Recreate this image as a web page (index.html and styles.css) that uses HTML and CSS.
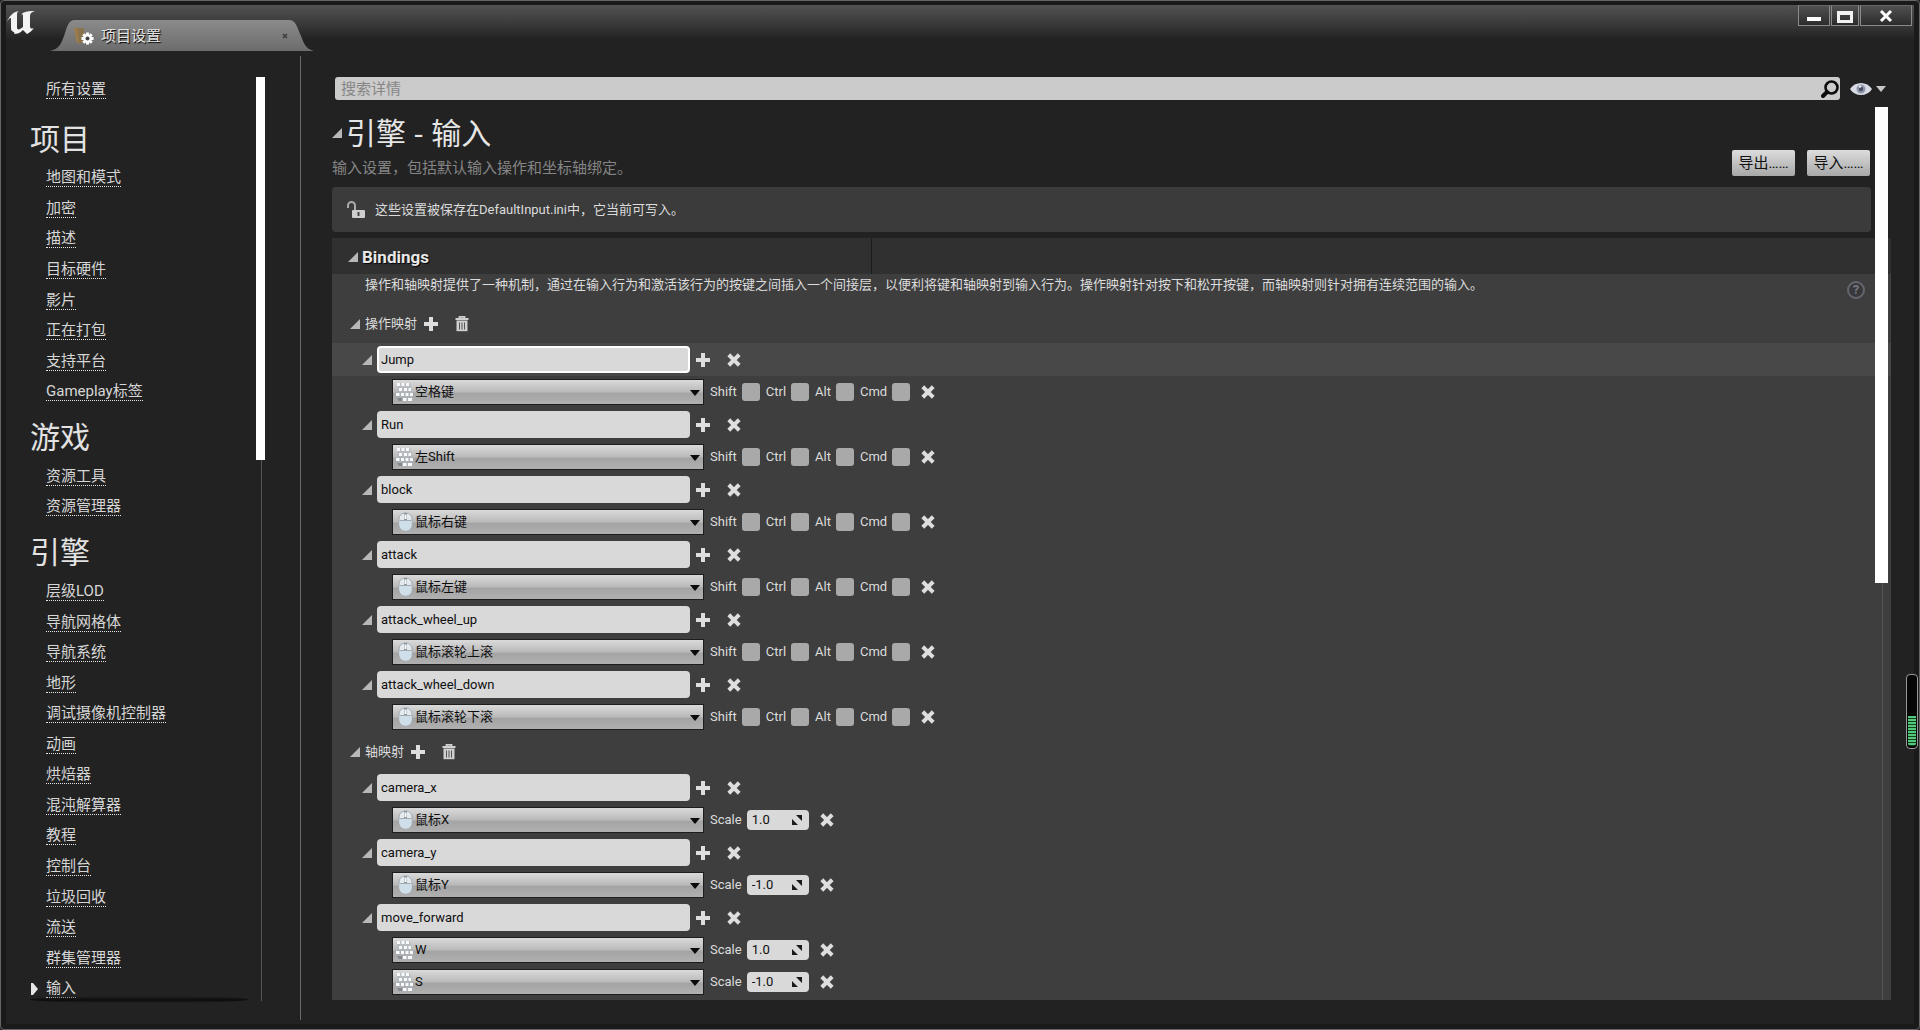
FILE: index.html
```html
<!DOCTYPE html>
<html lang="zh-CN">
<head>
<meta charset="utf-8">
<title>项目设置</title>
<link rel="stylesheet" href="styles.css">
</head>
<body>
<svg class="defs" aria-hidden="true">
  <symbol id="tri" viewBox="0 0 10 10"><path d="M10 0V10H0Z" fill="#b8b8b8"/></symbol>
  <symbol id="plus" viewBox="0 0 14 14"><path d="M5 0H9V5H14V9H9V14H5V9H0V5H5Z" fill="#dedede"/></symbol>
  <symbol id="cross" viewBox="0 0 14 14"><path d="M3.200 3.200L10.800 10.800M10.800 3.200L3.200 10.800" stroke="#dedede" stroke-width="4" stroke-linecap="square"/></symbol>
  <symbol id="trash" viewBox="0 0 14 16"><path d="M4.500 2V.8H9.500V2M.5 3H13.500" stroke="#d0d0d0" stroke-width="1.800" fill="none"/><path d="M1.500 4.500H12.500V15.200H1.500Z" fill="#d0d0d0"/><path d="M4.500 6.500V13.500M7 6.500V13.500M9.500 6.500V13.500" stroke="#555"/></symbol>
  <symbol id="down" viewBox="0 0 10 6"><path d="M0 0H10L5 6Z" fill="#0a0a0a"/></symbol>
  <symbol id="spin" viewBox="0 0 12 12"><path d="M5 1H11V7ZM1 5V11H7Z" fill="#1a1a1a"/></symbol>
  <symbol id="keys" viewBox="0 0 18 20"><path d="M1 1H14L18 19H3Z" fill="#aeb4ba" opacity=".6"/><g fill="#f7f9fb"><path d="M1 1h3v3H1zM5.500 1h3v3h-3zM10 1h3v3h-3zM3 6h3v3H3zM8 6h3v3H8zM12.500 6h2.500v3h-2.500zM0 11h3.500v3H0zM5 11h3v3H5zM9.500 11h3v3h-3zM14 11h3v3h-3zM7 16h3.500v3H7zM12 16h4v3h-4z"/></g><path d="M1 16h5v3H3z" fill="#84898e"/></symbol>
  <symbol id="mouse" viewBox="0 0 18 20"><rect x="3" y="1" width="13" height="18" rx="6" fill="#e4eaee" stroke="#a3abb2"/><path d="M3.500 9H15.500V13A6 5.500 0 0 1 3.500 13Z" fill="#cfdfea"/><path d="M9.500 1V8" stroke="#8d979f" stroke-width="3"/><path d="M3.500 8.500H15.500" stroke="#a3abb2"/><path d="M9.500 2.500V7" stroke="#fafcfd" stroke-width="2"/></symbol>
</svg>
<div class="window">
  <header class="titlebar">
    <svg class="logo" viewBox="0 0 30 25" aria-label="Unreal"><path d="M1 12C3 6 7 2 13 1C11 2 11 3 11 5V17C11 19 12 20 14 19L17 17V6C17 4 16 4 15 5C17 2 20 1 29 1C26 2 24 3 24 6V16C24 19 26 19 28 18C26 21 23 23 21 24L17 20C14 23 11 24 8 24C8 24 10 23 6 21C5 20 5 19 5 17V9C5 7 3 8 1 12Z" fill="#f4f4f4"/></svg>
    <div class="tab">
      <svg class="tab-shape" viewBox="0 0 264 31" preserveAspectRatio="none"><defs><linearGradient id="tg" x1="0" y1="0" x2="0" y2="1"><stop offset="0" stop-color="#8b8b8b"/><stop offset="1" stop-color="#6c6c6c"/></linearGradient></defs><path d="M0 31C9 29 11 24 14 16C17 7 18 0 25 0H239C246 0 247 7 251 16C254 24 256 29 264 31Z" fill="url(#tg)"/></svg>
      <svg class="tab-icon" viewBox="0 0 20 20"><path d="M0 1L5 3V18L2 15Z" fill="#9c7c4c"/><path d="M3 2H10V6L13 14L5 18Z" fill="#8a744e"/><g stroke="#fff" stroke-width="3"><path d="M13.500 6.500V18.500M7.500 12.500H19.500M9.300 8.300L17.700 16.700M17.700 8.300L9.300 16.700"/></g><circle cx="13.500" cy="12.500" r="4.200" fill="#fff"/><circle cx="13.500" cy="12.500" r="2" fill="#444"/></svg>
      <span class="tab-title">项目设置</span>
      <button class="tab-close" aria-label="关闭标签"><svg viewBox="0 0 6 6"><path d="M1 1L5 5M5 1L1 5" stroke="#3c3c3c" stroke-width="1.500"/></svg></button>
    </div>
    <div class="win-buttons">
      <button class="win-min" aria-label="最小化"><svg viewBox="0 0 18 16"><path d="M2 9H16V13H2Z" fill="#fff"/></svg></button>
      <button class="win-max" aria-label="最大化"><svg viewBox="0 0 18 16"><path d="M1 3H17V15H1ZM4 7V12H14V7Z" fill="#f2f2f2" fill-rule="evenodd"/></svg></button>
      <button class="win-close" aria-label="关闭"><svg viewBox="0 0 18 16"><path d="M4 3L14 13M14 3L4 13" stroke="#fff" stroke-width="3"/></svg></button>
    </div>
  </header>
  <div class="content">
    <aside class="sidebar">
      <nav class="nav">
        <div class="item"><a href="#">所有设置</a></div>
        <h2 class="first">项目</h2>
        <div class="item"><a href="#">地图和模式</a></div>
        <div class="item"><a href="#">加密</a></div>
        <div class="item"><a href="#">描述</a></div>
        <div class="item"><a href="#">目标硬件</a></div>
        <div class="item"><a href="#">影片</a></div>
        <div class="item"><a href="#">正在打包</a></div>
        <div class="item"><a href="#">支持平台</a></div>
        <div class="item"><a href="#">Gameplay标签</a></div>
        <h2>游戏</h2>
        <div class="item"><a href="#">资源工具</a></div>
        <div class="item"><a href="#">资源管理器</a></div>
        <h2>引擎</h2>
        <div class="item"><a href="#">层级LOD</a></div>
        <div class="item"><a href="#">导航网格体</a></div>
        <div class="item"><a href="#">导航系统</a></div>
        <div class="item"><a href="#">地形</a></div>
        <div class="item"><a href="#">调试摄像机控制器</a></div>
        <div class="item"><a href="#">动画</a></div>
        <div class="item"><a href="#">烘焙器</a></div>
        <div class="item"><a href="#">混沌解算器</a></div>
        <div class="item"><a href="#">教程</a></div>
        <div class="item"><a href="#">控制台</a></div>
        <div class="item"><a href="#">垃圾回收</a></div>
        <div class="item"><a href="#">流送</a></div>
        <div class="item"><a href="#">群集管理器</a></div>
        <div class="item current"><svg viewBox="0 0 7 12"><path d="M0 0H2L7 6L2 12H0Z" fill="#e6e6e6"/></svg><a href="#" aria-current="page">输入</a></div>
      </nav>
      <div class="scroll side-scroll"><span class="thumb"></span></div>
    </aside>
    <main class="main">
      <div class="search-row">
        <label class="search"><input type="text" placeholder="搜索详情" aria-label="搜索详情"><svg viewBox="0 0 18 18"><circle cx="10.500" cy="7.500" r="6" fill="none" stroke="#0c0c0c" stroke-width="2.600"/><path d="M6 12L2 16" stroke="#0c0c0c" stroke-width="4" stroke-linecap="round"/></svg></label>
        <button class="view" aria-label="视图选项"><svg class="eye" viewBox="0 0 22 14"><path d="M0 7C5 -1 17 -1 22 7C17 15 5 15 0 7Z" fill="#d9dce6"/><circle cx="11" cy="7" r="4.500" fill="#8f96ab"/><circle cx="11" cy="7" r="2.200" fill="#4a4f62"/><circle cx="10" cy="4.500" r="1.300" fill="#e8eaf2"/></svg><svg class="caret" viewBox="0 0 10 6"><path d="M0 0H10L5 6Z" fill="#c8c8c8"/></svg></button>
      </div>
      <div class="scroll-area">
        <div class="page-head">
          <div class="titles">
            <h1><svg class="tri"><use href="#tri"/></svg>引擎 - 输入</h1>
            <p>输入设置，包括默认输入操作和坐标轴绑定。</p>
          </div>
          <div class="actions"><button>导出……</button><button>导入……</button></div>
        </div>
        <div class="notice"><svg viewBox="0 0 18 18"><path d="M1 7V4.500A3.500 3.500 0 0 1 8 4.500V9" fill="none" stroke="#aaa" stroke-width="2"/><rect x="5" y="9" width="13" height="8" rx="1" fill="#cfcfcf"/><path d="M11.500 11V15" stroke="#444" stroke-width="2"/></svg>这些设置被保存在DefaultInput.ini中，它当前可写入。</div>
        <section class="panel">
          <div class="panel-head"><h3><svg class="tri"><use href="#tri"/></svg>Bindings</h3><span></span></div>
          <div class="desc"><p>操作和轴映射提供了一种机制，通过在输入行为和激活该行为的按键之间插入一个间接层，以便利将键和轴映射到输入行为。操作映射针对按下和松开按键，而轴映射则针对拥有连续范围的输入。</p><button class="help" aria-label="帮助">?</button></div>
          <div class="group-head"><svg class="tri"><use href="#tri"/></svg><span>操作映射</span><button class="ico" aria-label="添加"><svg><use href="#plus"/></svg></button><button class="ico" aria-label="全部删除"><svg class="bin"><use href="#trash"/></svg></button></div>

          <div class="name-row selected"><svg class="tri"><use href="#tri"/></svg><input type="text" value="Jump" aria-label="操作名称"><button class="ico" aria-label="添加"><svg><use href="#plus"/></svg></button><button class="ico" aria-label="移除"><svg><use href="#cross"/></svg></button></div>
          <div class="key-row"><div class="combo"><svg class="kind"><use href="#keys"/></svg><select aria-label="按键"><option>空格键</option></select><svg class="drop"><use href="#down"/></svg></div><label>Shift<input type="checkbox"></label><label>Ctrl<input type="checkbox"></label><label>Alt<input type="checkbox"></label><label>Cmd<input type="checkbox"></label><button class="ico" aria-label="移除"><svg><use href="#cross"/></svg></button></div>

          <div class="name-row"><svg class="tri"><use href="#tri"/></svg><input type="text" value="Run" aria-label="操作名称"><button class="ico" aria-label="添加"><svg><use href="#plus"/></svg></button><button class="ico" aria-label="移除"><svg><use href="#cross"/></svg></button></div>
          <div class="key-row"><div class="combo"><svg class="kind"><use href="#keys"/></svg><select aria-label="按键"><option>左Shift</option></select><svg class="drop"><use href="#down"/></svg></div><label>Shift<input type="checkbox"></label><label>Ctrl<input type="checkbox"></label><label>Alt<input type="checkbox"></label><label>Cmd<input type="checkbox"></label><button class="ico" aria-label="移除"><svg><use href="#cross"/></svg></button></div>

          <div class="name-row"><svg class="tri"><use href="#tri"/></svg><input type="text" value="block" aria-label="操作名称"><button class="ico" aria-label="添加"><svg><use href="#plus"/></svg></button><button class="ico" aria-label="移除"><svg><use href="#cross"/></svg></button></div>
          <div class="key-row"><div class="combo"><svg class="kind"><use href="#mouse"/></svg><select aria-label="按键"><option>鼠标右键</option></select><svg class="drop"><use href="#down"/></svg></div><label>Shift<input type="checkbox"></label><label>Ctrl<input type="checkbox"></label><label>Alt<input type="checkbox"></label><label>Cmd<input type="checkbox"></label><button class="ico" aria-label="移除"><svg><use href="#cross"/></svg></button></div>

          <div class="name-row"><svg class="tri"><use href="#tri"/></svg><input type="text" value="attack" aria-label="操作名称"><button class="ico" aria-label="添加"><svg><use href="#plus"/></svg></button><button class="ico" aria-label="移除"><svg><use href="#cross"/></svg></button></div>
          <div class="key-row"><div class="combo"><svg class="kind"><use href="#mouse"/></svg><select aria-label="按键"><option>鼠标左键</option></select><svg class="drop"><use href="#down"/></svg></div><label>Shift<input type="checkbox"></label><label>Ctrl<input type="checkbox"></label><label>Alt<input type="checkbox"></label><label>Cmd<input type="checkbox"></label><button class="ico" aria-label="移除"><svg><use href="#cross"/></svg></button></div>

          <div class="name-row"><svg class="tri"><use href="#tri"/></svg><input type="text" value="attack_wheel_up" aria-label="操作名称"><button class="ico" aria-label="添加"><svg><use href="#plus"/></svg></button><button class="ico" aria-label="移除"><svg><use href="#cross"/></svg></button></div>
          <div class="key-row"><div class="combo"><svg class="kind"><use href="#mouse"/></svg><select aria-label="按键"><option>鼠标滚轮上滚</option></select><svg class="drop"><use href="#down"/></svg></div><label>Shift<input type="checkbox"></label><label>Ctrl<input type="checkbox"></label><label>Alt<input type="checkbox"></label><label>Cmd<input type="checkbox"></label><button class="ico" aria-label="移除"><svg><use href="#cross"/></svg></button></div>

          <div class="name-row"><svg class="tri"><use href="#tri"/></svg><input type="text" value="attack_wheel_down" aria-label="操作名称"><button class="ico" aria-label="添加"><svg><use href="#plus"/></svg></button><button class="ico" aria-label="移除"><svg><use href="#cross"/></svg></button></div>
          <div class="key-row"><div class="combo"><svg class="kind"><use href="#mouse"/></svg><select aria-label="按键"><option>鼠标滚轮下滚</option></select><svg class="drop"><use href="#down"/></svg></div><label>Shift<input type="checkbox"></label><label>Ctrl<input type="checkbox"></label><label>Alt<input type="checkbox"></label><label>Cmd<input type="checkbox"></label><button class="ico" aria-label="移除"><svg><use href="#cross"/></svg></button></div>

          <div class="group-head"><svg class="tri"><use href="#tri"/></svg><span>轴映射</span><button class="ico" aria-label="添加"><svg><use href="#plus"/></svg></button><button class="ico" aria-label="全部删除"><svg class="bin"><use href="#trash"/></svg></button></div>

          <div class="name-row"><svg class="tri"><use href="#tri"/></svg><input type="text" value="camera_x" aria-label="轴名称"><button class="ico" aria-label="添加"><svg><use href="#plus"/></svg></button><button class="ico" aria-label="移除"><svg><use href="#cross"/></svg></button></div>
          <div class="key-row"><div class="combo"><svg class="kind"><use href="#mouse"/></svg><select aria-label="按键"><option>鼠标X</option></select><svg class="drop"><use href="#down"/></svg></div><label class="scale">Scale<span class="spin"><input type="text" value="1.0"><svg><use href="#spin"/></svg></span></label><button class="ico" aria-label="移除"><svg><use href="#cross"/></svg></button></div>

          <div class="name-row"><svg class="tri"><use href="#tri"/></svg><input type="text" value="camera_y" aria-label="轴名称"><button class="ico" aria-label="添加"><svg><use href="#plus"/></svg></button><button class="ico" aria-label="移除"><svg><use href="#cross"/></svg></button></div>
          <div class="key-row"><div class="combo"><svg class="kind"><use href="#mouse"/></svg><select aria-label="按键"><option>鼠标Y</option></select><svg class="drop"><use href="#down"/></svg></div><label class="scale">Scale<span class="spin"><input type="text" value="-1.0"><svg><use href="#spin"/></svg></span></label><button class="ico" aria-label="移除"><svg><use href="#cross"/></svg></button></div>

          <div class="name-row"><svg class="tri"><use href="#tri"/></svg><input type="text" value="move_forward" aria-label="轴名称"><button class="ico" aria-label="添加"><svg><use href="#plus"/></svg></button><button class="ico" aria-label="移除"><svg><use href="#cross"/></svg></button></div>
          <div class="key-row"><div class="combo"><svg class="kind"><use href="#keys"/></svg><select aria-label="按键"><option>W</option></select><svg class="drop"><use href="#down"/></svg></div><label class="scale">Scale<span class="spin"><input type="text" value="1.0"><svg><use href="#spin"/></svg></span></label><button class="ico" aria-label="移除"><svg><use href="#cross"/></svg></button></div>
          <div class="key-row"><div class="combo"><svg class="kind"><use href="#keys"/></svg><select aria-label="按键"><option>S</option></select><svg class="drop"><use href="#down"/></svg></div><label class="scale">Scale<span class="spin"><input type="text" value="-1.0"><svg><use href="#spin"/></svg></span></label><button class="ico" aria-label="移除"><svg><use href="#cross"/></svg></button></div>
        </section>
        <div class="scroll main-scroll"><span class="thumb"></span></div>
      </div>
    </main>
  </div>
  <div class="meter" aria-hidden="true"><span></span></div>
</div>
</body>
</html>
```
FILE: styles.css
```css
* { box-sizing: border-box; }
body {
  margin: 0;
  background: #222;
  color: #dcdcdc;
  font: 13px/20px Roboto, "Noto Sans CJK SC", sans-serif;
}
h1, h2, h3, p { margin: 0; font-weight: 400; }
button, input, select { font: inherit; margin: 0; padding: 0; border: 0; }
button { background: none; color: inherit; }
svg { display: block; flex: none; }
.defs { display: none; }

.window {
  position: relative;
  display: flex;
  flex-direction: column;
  height: 100vh;
  padding: 4px 5px 5px;
  background: #1a1a1a;
  border: 1px solid #666;
  border-radius: 4px;
}

/* title bar */
.titlebar {
  display: flex;
  align-items: flex-start;
  height: 46px;
  background: linear-gradient(#525252, #3a3a3a 40%, #222 75%, #222);
}
.logo { width: 30px; height: 25px; margin-top: 5px; }
.tab {
  position: relative;
  display: flex;
  align-items: center;
  align-self: flex-end;
  width: 264px;
  height: 31px;
  margin-left: 14px;
  padding: 0 26px 0 24px;
  gap: 7px;
}
.tab-shape { position: absolute; inset: 0; width: 100%; height: 100%; }
.tab-icon { position: relative; width: 20px; height: 20px; }
.tab-title {
  position: relative;
  flex: 1;
  font-size: 15px;
  color: #e4e4e4;
  text-shadow: 1px 1px 1px #000;
}
.tab-close { position: relative; }
.tab-close svg { width: 6px; height: 6px; }
.win-buttons { display: flex; gap: 1px; margin-left: auto; padding-right: 2px; }
.win-buttons button {
  display: flex;
  align-items: center;
  justify-content: center;
  height: 21px;
  border: 1px solid #8a8a8a;
  border-top-color: #666;
  background: linear-gradient(#505050, #2c2c2c);
}
.win-buttons .win-min { width: 32px; }
.win-buttons .win-max { width: 28px; }
.win-buttons .win-close { width: 52px; }
.win-buttons svg { width: 18px; height: 16px; }

.content { display: flex; flex: 1; min-height: 0; background: #222; }

/* sidebar */
.sidebar {
  display: flex;
  width: 295px;
  padding: 23px 36px 20px 24px;
  position: relative;
}
.sidebar::after {
  content: "";
  position: absolute;
  right: 0;
  top: 5px;
  bottom: 4px;
  width: 1px;
  background: #6a6a6a;
}
.nav {
  position: relative;
  display: flex;
  flex: 1;
  flex-direction: column;
}
.nav::after {
  content: "";
  position: absolute;
  left: 0;
  right: 8px;
  bottom: 1px;
  height: 7px;
  background: linear-gradient(transparent, #0c0c0c 60%, transparent);
  border-radius: 50% / 4px;
}
.item { display: flex; flex: 1; align-items: center; padding-left: 16px; font-size: 15px; }
.item a {
  color: #d6d6d6;
  line-height: 18px;
  text-decoration: none;
  border-bottom: 1px dotted #e6e6e6;
}
.current { padding-left: 1px; gap: 8px; }
.current svg { width: 7px; height: 12px; }
.nav h2 { padding-top: 8px; font-size: 30px; line-height: 46px; color: #e2e2e2; }
.nav h2.first { padding-top: 12px; }
.scroll { position: relative; }
.scroll::before {
  content: "";
  position: absolute;
  inset: 0 auto 0 50%;
  width: 1px;
  background: #565656;
}
.thumb { position: absolute; inset: 0 0 auto; background: #fff; }
.side-scroll { width: 9px; margin: 3px 0; }
.side-scroll .thumb { height: 41.5%; }

/* main column */
.main {
  display: flex;
  flex: 1;
  flex-direction: column;
  min-width: 0;
  padding: 26px 23px 24px 31px;
}
.search-row { display: flex; align-items: center; gap: 10px; padding-left: 3px; }
.search {
  display: flex;
  flex: 1;
  align-items: center;
  height: 23px;
  padding: 0 1px 0 6px;
  background: #cbcbcb;
  border-radius: 3px;
}
.search input { flex: 1; background: none; font-size: 15px; outline: 0; }
.search input::placeholder { color: #868686; opacity: 1; }
.search svg { width: 18px; height: 18px; }
.view { display: flex; align-items: center; gap: 4px; padding-right: 5px; }
.eye { width: 22px; height: 14px; }
.caret { width: 10px; height: 6px; }

.scroll-area {
  position: relative;
  flex: 1;
  min-height: 0;
  margin-top: 7px;
  display: flex;
  flex-direction: column;
}
.tri { width: 10px; height: 10px; }
.page-head { display: flex; align-items: flex-end; justify-content: space-between; padding: 0 21px 9px 0; }
.page-head h1 {
  display: flex;
  align-items: center;
  gap: 4px;
  font-family: "Open Sans", "Noto Sans CJK SC", sans-serif;
  font-size: 30px;
  line-height: 51px;
  color: #e6e6e6;
}
.page-head p { font-size: 15px; color: #858585; }
.actions { display: flex; gap: 12px; padding-bottom: 2px; }
.actions button {
  width: 63px;
  height: 26px;
  background: linear-gradient(#dcdcdc, #a8a8a8);
  color: #111;
  font-size: 15px;
  border-radius: 2px;
}
.notice {
  display: flex;
  align-items: center;
  gap: 10px;
  height: 45px;
  margin: 0 20px 6px 0;
  padding-left: 15px;
  background: #3b3b3b;
  border-radius: 4px;
}
.notice svg { width: 18px; height: 18px; }

.panel { flex: 1; min-height: 0; background: #3e3e3e; }
.panel-head { display: grid; grid-template-columns: 539px 1fr; height: 36px; background: #303030; }
.panel-head span { border-left: 1px solid #1c1c1c; }
.panel-head h3 {
  display: flex;
  align-items: center;
  gap: 4px;
  padding: 1px 0 0 16px;
  font-size: 17px;
  font-weight: 700;
  color: #e8e8e8;
  text-shadow: 1px 1px 1px #000;
}
.desc { display: flex; justify-content: space-between; height: 31px; padding: 1px 26px 0 33px; }
.help {
  width: 18px;
  height: 18px;
  margin-top: 6px;
  border: 2px solid #65656d;
  border-radius: 50%;
  background: #38383c;
  color: #77777f;
  font-weight: 700;
  line-height: 14px;
}
.group-head { display: flex; align-items: center; height: 38px; padding-left: 18px; }
.group-head span { margin: 0 7px 0 5px; }
.ico { display: flex; align-items: center; justify-content: center; width: 14px; height: 16px; }
.ico svg { width: 14px; height: 14px; }
.ico .bin { height: 16px; }
.ico + .ico { margin-left: 17px; }
.name-row { display: flex; align-items: center; height: 33px; padding-left: 30px; }
.name-row.selected { background: #484848; }
.name-row > input {
  width: 313px;
  height: 27px;
  margin: 0 6px 0 5px;
  padding: 0 4px;
  border-radius: 4px;
  background: #d9d9d9;
  color: #0e0e0e;
}
.name-row.selected > input { border: 2px solid #fff; padding: 0 2px; }
.key-row { display: flex; align-items: center; height: 32px; padding-left: 60px; }
.combo { position: relative; width: 312px; margin-right: 6px; }
.combo select {
  display: block;
  appearance: none;
  width: 100%;
  height: 26px;
  padding-left: 22px;
  border: 1px solid #1d1d1d;
  background: linear-gradient(#dadada, #b9b9b9 50%, #a4a4a4 55%, #b0b0b0);
  color: #0e0e0e;
}
.kind { position: absolute; left: 4px; top: 3px; width: 18px; height: 20px; }
.drop { position: absolute; right: 4px; top: 11px; width: 10px; height: 6px; }
.key-row label { display: flex; align-items: center; gap: 5px; margin-right: 6px; }
.key-row label input[type="checkbox"] {
  appearance: none;
  width: 18px;
  height: 18px;
  border-radius: 3px;
  background: #a9a9a9;
}
.key-row .ico { margin-left: 5px; }
.spin { position: relative; display: block; }
.spin input {
  display: block;
  width: 62px;
  height: 20px;
  padding-left: 5px;
  border-radius: 4px;
  background: #d9d9d9;
  color: #0e0e0e;
}
.spin svg { position: absolute; right: 6px; top: 4px; width: 12px; height: 12px; }
.main-scroll { position: absolute; right: 3px; top: 0; bottom: 0; width: 13px; }
.main-scroll .thumb { height: 53.3%; }

/* level meter docked at the right edge of the window */
.meter {
  position: absolute;
  right: 1px;
  bottom: 280px;
  width: 12px;
  height: 75px;
  padding: 2px 1px;
  display: flex;
  align-items: flex-end;
  background: #060606;
  border: 1px solid #999;
  border-radius: 4px;
}
.meter span {
  width: 100%;
  height: 30px;
  border-radius: 0 0 3px 3px;
  background: repeating-linear-gradient(#52c878 0 2px, #124022 2px 3px);
}
```
